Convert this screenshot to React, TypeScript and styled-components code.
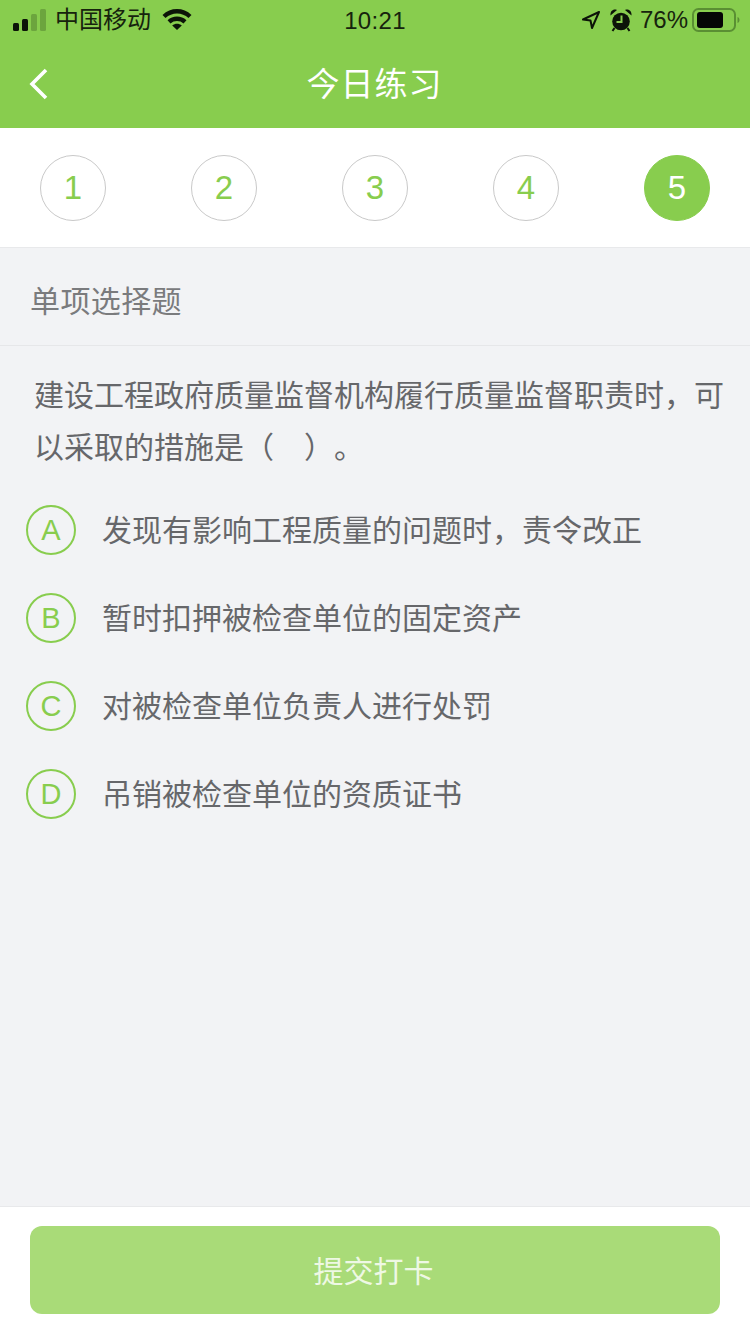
import React from "react";
import styled, { createGlobalStyle } from "styled-components";

const GlobalStyle = createGlobalStyle`
  html, body {
    margin: 0;
    padding: 0;
    height: 100%;
  }
  body {
    font-family: "Liberation Sans", "Noto Sans CJK SC", sans-serif;
    background: #f2f3f5;
    text-spacing-trim: space-all;
  }
  * {
    box-sizing: border-box;
  }
`;

const Page = styled.div`
  width: 750px;
  height: 1334px;
  display: flex;
  flex-direction: column;
  background: #f2f3f5;
  overflow: hidden;
`;

// HEADER

const Header = styled.header`
  height: 128px;
  background: #88cd4e;
  display: flex;
  flex-direction: column;
`;

const StatusBar = styled.div`
  height: 40px;
  display: grid;
  grid-template-columns: 1fr auto 1fr;
  align-items: center;
  color: #16230d;
  font-size: 25px;
`;

const StatusLeft = styled.div`
  display: flex;
  align-items: center;
  padding-left: 13px;
`;

const Carrier = styled.span`
  margin-left: 8px;
  margin-right: 11px;
  font-size: 24px;
  line-height: 40px;
`;

const Clock = styled.span`
  font-size: 24px;
  letter-spacing: 0.3px;
  padding-top: 2px;
`;

const StatusRight = styled.div`
  display: flex;
  align-items: center;
  justify-content: flex-end;
  padding-right: 10px;
`;

const Percent = styled.span`
  margin: 0 4px 0 8px;
  font-size: 24px;
`;

const NavBar = styled.div`
  flex: 1;
  display: flex;
  align-items: center;
  justify-content: center;
  position: relative;
  padding: 0 1px 4px 0;
`;

const BackButton = styled.button`
  position: absolute;
  left: 29px;
  top: 28px;
  width: 20px;
  height: 32px;
  padding: 0;
  border: none;
  background: none;
  display: flex;
`;

const Title = styled.h1`
  margin: 0;
  font-size: 33px;
  font-weight: 400;
  color: #fff;
  letter-spacing: 1px;
`;

// STEPS

const Steps = styled.div`
  height: 120px;
  background: #fff;
  border-bottom: 1px solid #e8e9eb;
  display: flex;
  align-items: center;
  justify-content: space-between;
  padding: 0 40px;
`;

const Step = styled.div<{ $active?: boolean }>`
  width: 66px;
  height: 66px;
  border-radius: 50%;
  border: 1px solid ${p => (p.$active ? "#88cd4e" : "#c9c9c9")};
  background: ${p => (p.$active ? "#88cd4e" : "#fff")};
  color: ${p => (p.$active ? "#fff" : "#88cd4e")};
  display: flex;
  align-items: center;
  justify-content: center;
  font-size: 33px;
`;

// QUESTION

const SectionLabel = styled.div`
  height: 98px;
  padding: 4px 30px 0;
  border-bottom: 1px solid #e6e7e9;
  display: flex;
  align-items: center;
  font-size: 30px;
  letter-spacing: 0.4px;
  color: #7a7b7d;
`;

const Question = styled.p`
  margin: 0;
  padding: 24px 20px 0 34px;
  font-size: 30px;
  line-height: 52px;
  color: #66676a;
`;

const Options = styled.div`
  flex: 1;
  display: flex;
  flex-direction: column;
  gap: 38px;
  padding: 31px 26px 0;
`;

const Option = styled.div`
  height: 50px;
  display: flex;
  align-items: center;
  gap: 26px;
`;

const OptionBadge = styled.span`
  width: 50px;
  height: 50px;
  flex: none;
  border-radius: 50%;
  border: 2px solid #88cd4e;
  color: #88cd4e;
  display: flex;
  align-items: center;
  justify-content: center;
  font-size: 29px;
`;

const OptionText = styled.span`
  font-size: 30px;
  color: #66676a;
  margin-bottom: 4px;
`;

// FOOTER

const Footer = styled.footer`
  height: 128px;
  background: #fff;
  border-top: 1px solid #e8e9eb;
  padding: 19px 30px 0;
`;

const SubmitButton = styled.button`
  width: 690px;
  height: 88px;
  border: none;
  border-radius: 12px;
  background: #a9db78;
  color: #eef8e4;
  font-family: inherit;
  font-size: 30px;
  padding: 0 3px 3px 0;
`;

const SignalBars = () => (
  <svg width="34" height="24" viewBox="0 0 34 24">
    <rect x="0" y="15" width="6" height="8" rx="1.5" fill="#0c1408" />
    <rect x="9" y="11" width="6" height="12" rx="1.5" fill="#0c1408" />
    <rect x="18" y="6" width="6" height="17" rx="1.5" fill="#6ca53e" />
    <rect x="27" y="1" width="6" height="22" rx="1.5" fill="#6ca53e" />
  </svg>
);

const WifiIcon = () => (
  <svg width="30" height="24" viewBox="0 0 30 24" fill="none" stroke="#0c1408" strokeWidth="4.4">
    <path d="M2 8.5C9.5 1.5 20.5 1.5 28 8.5" />
    <path d="M7 13.8C11.5 9.8 18.5 9.8 23 13.8" />
    <path d="M15 22L10.2 17.4C13 15.2 17 15.2 19.8 17.4Z" fill="#0c1408" stroke="none" />
  </svg>
);

const LocationIcon = () => (
  <svg width="20" height="20" viewBox="0 0 20 20" fill="none" stroke="#0c1408" strokeWidth="2" strokeLinejoin="round">
    <path d="M18 2L2 9.5L9.5 10.5L11 18Z" />
  </svg>
);

const AlarmIcon = () => (
  <svg width="22" height="24" viewBox="0 0 22 24" style={{ marginLeft: 9 }}>
    <circle cx="11" cy="13.5" r="8.8" fill="#0c1408" />
    <path d="M11.5 7.5V14H6.5" fill="none" stroke="#88cd4e" strokeWidth="2" />
    <path d="M0.5 7.5C0 3 3.5 0.5 7 2Z M21.5 7.5C22 3 18.5 0.5 15 2Z" fill="#0c1408" />
    <path d="M4.5 20L2.5 23M17.5 20L19.5 23" stroke="#0c1408" strokeWidth="2" />
  </svg>
);

const BatteryIcon = () => (
  <svg width="48" height="24" viewBox="0 0 48 24">
    <rect x="1" y="1" width="42" height="22" rx="5.5" fill="none" stroke="#5a8f33" strokeWidth="2" />
    <rect x="5" y="4" width="26" height="16" rx="3" fill="#050505" />
    <path d="M45.5 9V15C47 14.5 47.5 13 47.5 12C47.5 11 47 9.5 45.5 9Z" fill="#5a8f33" />
  </svg>
);

const BackIcon = () => (
  <svg width="20" height="32" viewBox="0 0 20 32" fill="none" stroke="#fff" strokeWidth="3.6">
    <path d="M17 2L3 16L17 30" />
  </svg>
);

const steps = ["1", "2", "3", "4", "5"];

const options = [
  { key: "A", text: "发现有影响工程质量的问题时，责令改正" },
  { key: "B", text: "暂时扣押被检查单位的固定资产" },
  { key: "C", text: "对被检查单位负责人进行处罚" },
  { key: "D", text: "吊销被检查单位的资质证书" },
];

export default function App() {
  return (
    <Page>
      <GlobalStyle />
      <Header>
        <StatusBar>
          <StatusLeft>
            <SignalBars />
            <Carrier>中国移动</Carrier>
            <WifiIcon />
          </StatusLeft>
          <Clock>10:21</Clock>
          <StatusRight>
            <LocationIcon />
            <AlarmIcon />
            <Percent>76%</Percent>
            <BatteryIcon />
          </StatusRight>
        </StatusBar>
        <NavBar>
          <BackButton aria-label="back">
            <BackIcon />
          </BackButton>
          <Title>今日练习</Title>
        </NavBar>
      </Header>
      <Steps>
        {steps.map(s => (
          <Step key={s} $active={s === "5"}>{s}</Step>
        ))}
      </Steps>
      <SectionLabel>单项选择题</SectionLabel>
      <Question>建设工程政府质量监督机构履行质量监督职责时，可以采取的措施是（　）。</Question>
      <Options>
        {options.map(o => (
          <Option key={o.key}>
            <OptionBadge>{o.key}</OptionBadge>
            <OptionText>{o.text}</OptionText>
          </Option>
        ))}
      </Options>
      <Footer>
        <SubmitButton>提交打卡</SubmitButton>
      </Footer>
    </Page>
  );
}
